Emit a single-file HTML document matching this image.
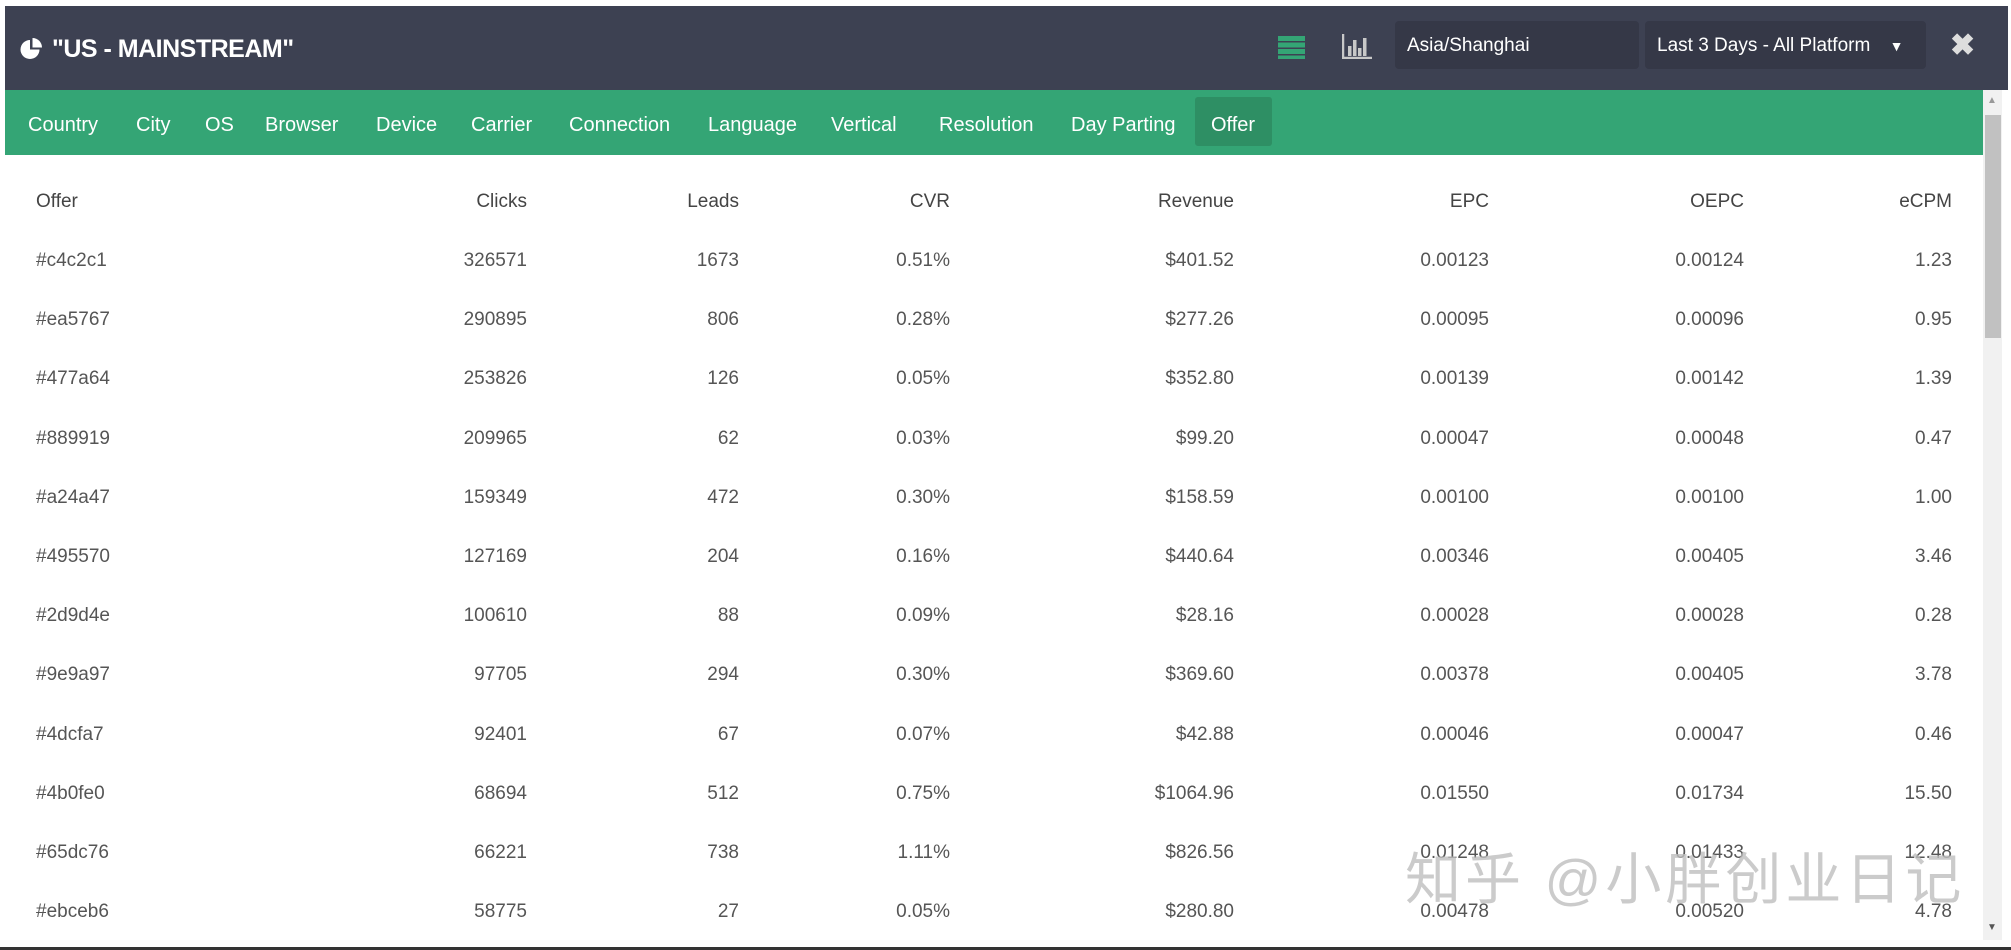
<!DOCTYPE html>
<html><head><meta charset="utf-8"><style>
*{margin:0;padding:0;box-sizing:border-box}
body{width:2011px;height:950px;background:#fff;font-family:"Liberation Sans","Noto Sans CJK SC",sans-serif;position:relative;overflow:hidden}
.hdr{position:absolute;left:5px;top:6px;width:2003px;height:84px;background:#3d4152}
.title{position:absolute;left:52px;top:35px;color:#fff;font-size:25px;font-weight:bold;letter-spacing:-0.5px;white-space:nowrap}
.nav{position:absolute;left:5px;top:90px;width:1978px;height:65px;background:#34a575}
.act{position:absolute;left:1195px;top:97px;width:77px;height:49px;background:#2e8f64;border-radius:3px}
.box{position:absolute;top:21px;height:48px;background:#353847;border-radius:4px;color:#fff;font-size:19px;padding:14px 12px;white-space:nowrap}
.sb{position:absolute;left:1983px;top:90px;width:19px;height:850px;background:#f1f1f1}
.thumb{position:absolute;left:1985px;top:115px;width:16px;height:223px;background:#c1c1c1}
.bot{position:absolute;left:0;top:947px;width:2011px;height:3px;background:#333}
.c{position:absolute;font-size:19px;color:#555;line-height:20px;white-space:nowrap}
.n{color:#fff;font-size:20px;top:115px}
.h{color:#444}
.r{text-align:right;width:200px}
.wm{position:absolute;left:1405px;top:835px;font-size:56px;color:rgba(190,190,190,0.8);letter-spacing:4px;white-space:nowrap}
</style></head><body>
<div class="hdr"></div>
<svg style="position:absolute;left:20px;top:37px" width="24" height="24" viewBox="0 0 24 24"><path d="M10 3 A9.5 9.5 0 1 0 19.5 12.5 L10 12.5 Z" fill="#fff"/><path d="M12.5 1 A9.5 9.5 0 0 1 22 10.5 L12.5 10.5 Z" fill="#fff"/></svg>
<div class="title">"US - MAINSTREAM"</div>
<svg style="position:absolute;left:1278px;top:35px" width="27" height="24"><rect x="0" y="1" width="27" height="5" fill="#34a575"/><rect x="0" y="7.5" width="27" height="5" fill="#34a575"/><rect x="0" y="14" width="27" height="5" fill="#34a575"/><rect x="0" y="20.5" width="27" height="3.5" fill="#34a575"/></svg>
<svg style="position:absolute;left:1342px;top:34px" width="30" height="25"><path d="M1 0V24H30" stroke="#c8c8c8" stroke-width="2.5" fill="none"/><rect x="6" y="12" width="3.5" height="10" fill="#c8c8c8"/><rect x="11" y="6" width="3.5" height="16" fill="#c8c8c8"/><rect x="16" y="14" width="3.5" height="8" fill="#c8c8c8"/><rect x="21" y="4" width="3.5" height="18" fill="#c8c8c8"/></svg>
<div class="box" style="left:1395px;width:244px">Asia/Shanghai</div>
<div class="box" style="left:1645px;width:281px">Last 3 Days - All Platform <span style="font-size:14px;margin-left:14px">▼</span></div>
<div style="position:absolute;left:1950px;top:28px;color:#ddd;font-size:30px;font-weight:bold">✖</div>
<div class="nav"></div>
<div class="act"></div>
<span class="c n" style="left:28px">Country</span>
<span class="c n" style="left:136px">City</span>
<span class="c n" style="left:205px">OS</span>
<span class="c n" style="left:265px">Browser</span>
<span class="c n" style="left:376px">Device</span>
<span class="c n" style="left:471px">Carrier</span>
<span class="c n" style="left:569px">Connection</span>
<span class="c n" style="left:708px">Language</span>
<span class="c n" style="left:831px">Vertical</span>
<span class="c n" style="left:939px">Resolution</span>
<span class="c n" style="left:1071px">Day Parting</span>
<span class="c n" style="left:1211px">Offer</span>
<div class="sb"></div><div class="thumb"></div>
<div style="position:absolute;left:1987px;top:95px;font-size:10px;color:#999">▲</div>
<div style="position:absolute;left:1987px;top:922px;font-size:10px;color:#555">▼</div>
<div id="t"></div>
<div class="wm">知乎 @小胖创业日记</div>
<div class="bot"></div>
<script>
var rows=[["Offer","Clicks","Leads","CVR","Revenue","EPC","OEPC","eCPM"],
["#c4c2c1","326571","1673","0.51%","$401.52","0.00123","0.00124","1.23"],
["#ea5767","290895","806","0.28%","$277.26","0.00095","0.00096","0.95"],
["#477a64","253826","126","0.05%","$352.80","0.00139","0.00142","1.39"],
["#889919","209965","62","0.03%","$99.20","0.00047","0.00048","0.47"],
["#a24a47","159349","472","0.30%","$158.59","0.00100","0.00100","1.00"],
["#495570","127169","204","0.16%","$440.64","0.00346","0.00405","3.46"],
["#2d9d4e","100610","88","0.09%","$28.16","0.00028","0.00028","0.28"],
["#9e9a97","97705","294","0.30%","$369.60","0.00378","0.00405","3.78"],
["#4dcfa7","92401","67","0.07%","$42.88","0.00046","0.00047","0.46"],
["#4b0fe0","68694","512","0.75%","$1064.96","0.01550","0.01734","15.50"],
["#65dc76","66221","738","1.11%","$826.56","0.01248","0.01433","12.48"],
["#ebceb6","58775","27","0.05%","$280.80","0.00478","0.00520","4.78"]];
var R=[527,739,950,1234,1489,1744,1952],h="";
rows.forEach(function(r,i){var y=(i==0?199:258+59.2*(i-1))-7;
h+='<span class="c'+(i==0?' h':'')+'" style="left:36px;top:'+y+'px">'+r[0]+'</span>';
for(var j=1;j<8;j++)h+='<span class="c r'+(i==0?' h':'')+'" style="left:'+(R[j-1]-200)+'px;top:'+y+'px">'+r[j]+'</span>';});
document.getElementById('t').innerHTML=h;
</script>
</body></html>
